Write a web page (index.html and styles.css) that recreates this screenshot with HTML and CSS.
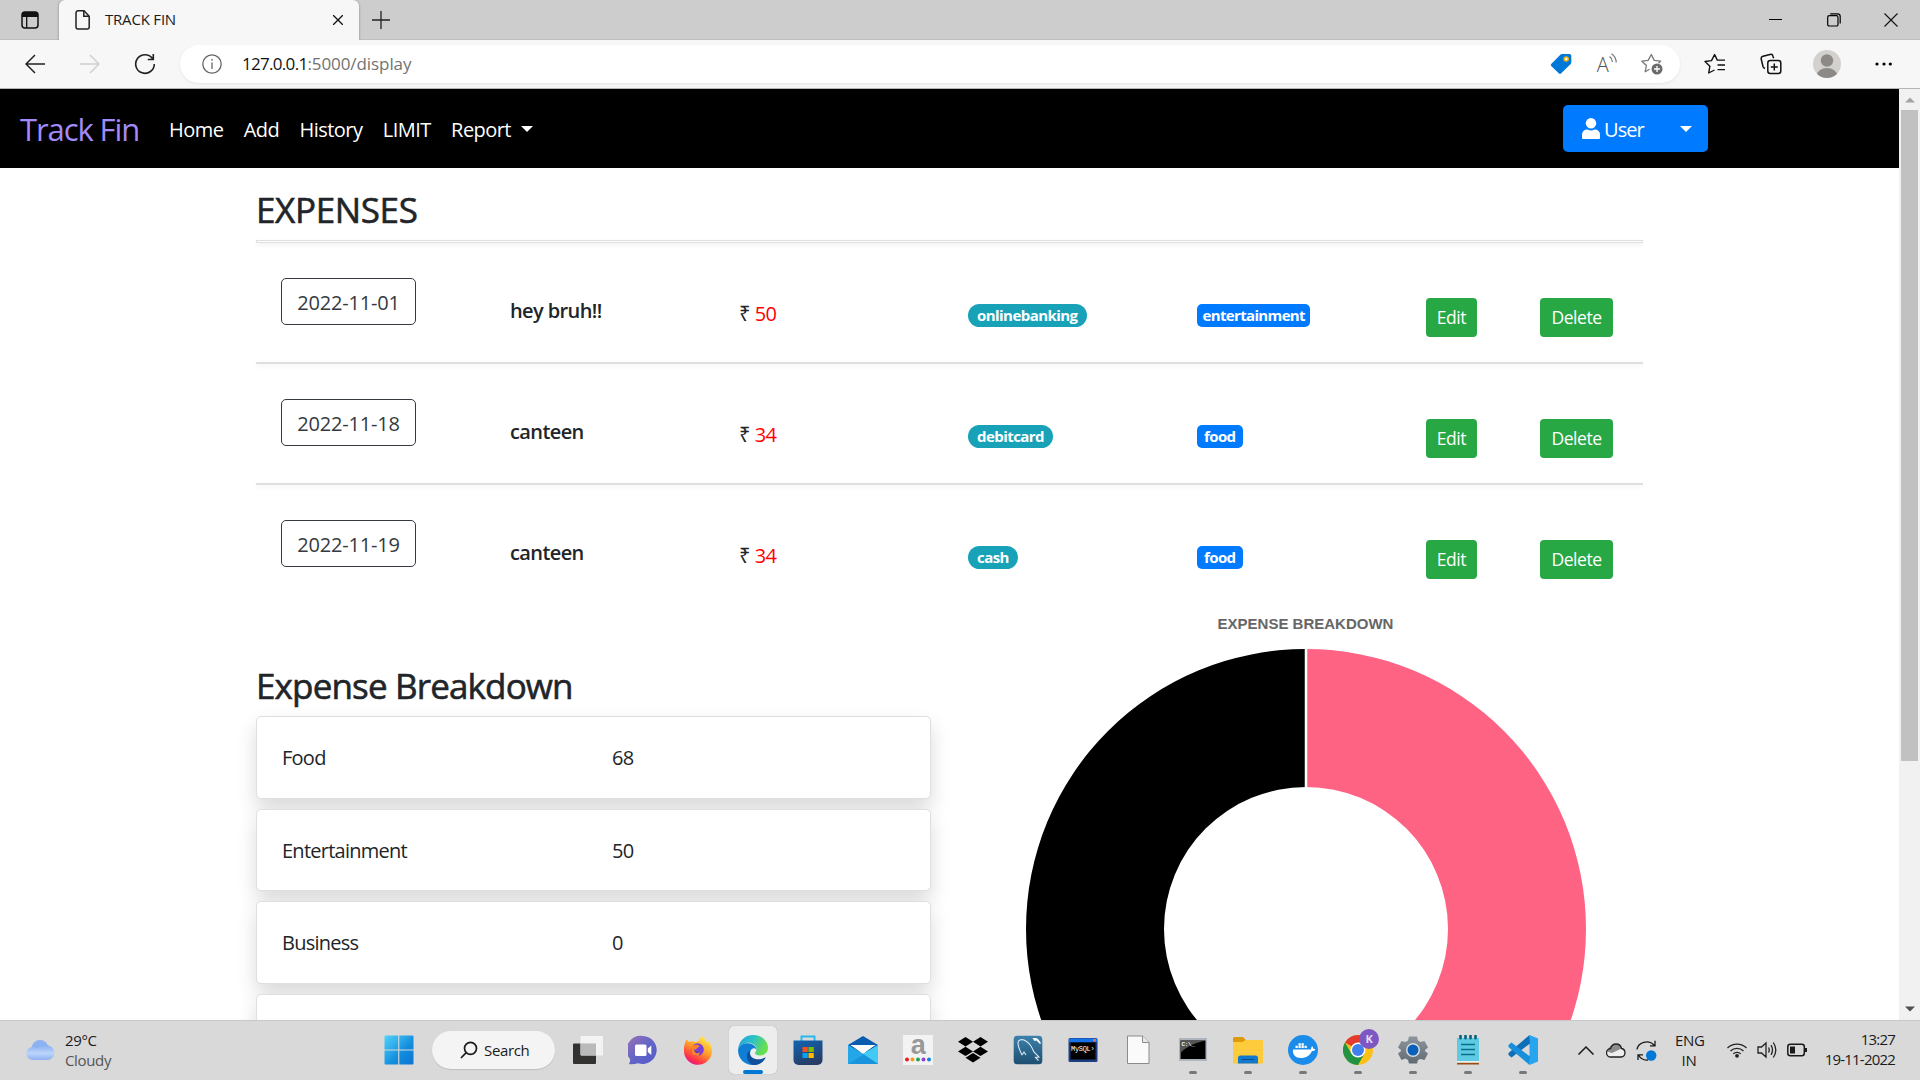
FILE: index.html
```
<!DOCTYPE html>
<html lang="en">
<head>
<meta charset="utf-8">
<title>TRACK FIN</title>
<link rel="stylesheet" href="styles.css">
</head>
<body>
<header class="titlebar">
  <div class="workspace"><svg width="18" height="18" viewBox="0 0 18 18"><rect x="1" y="1" width="16" height="16" rx="3" fill="none" stroke="#111" stroke-width="1.5"/><path d="M1 6V4a3 3 0 0 1 3-3h10a3 3 0 0 1 3 3v2z" fill="#111"/><path d="M5.7 5v12" stroke="#111" stroke-width="1.3"/></svg></div>
  <div class="tab">
    <svg width="15" height="20" viewBox="0 0 15 20" fill="none" stroke="#222" stroke-width="1.5"><path d="M3 .8h6l5.2 5.4V17a2 2 0 0 1-2 2H3a2 2 0 0 1-2-2V3A2 2 0 0 1 3 .8z"/><path d="M8.8 1v5.3h5.2"/></svg>
    <span class="tab-title">TRACK FIN</span>
    <svg width="10" height="10" viewBox="0 0 10 10" stroke="#111" stroke-width="1.3"><path d="M0 0l10 10M10 0L0 10"/></svg>
  </div>
  <svg class="new-tab" width="18" height="18" viewBox="0 0 18 18" stroke="#222" stroke-width="1.3"><path d="M9 0v18M0 9h18"/></svg>
  <div class="window-controls">
    <span><svg width="14" height="14" viewBox="0 0 14 14"><path d="M0 6.5h13" stroke="#000"/></svg></span>
    <span><svg width="14" height="14" viewBox="0 0 14 14" fill="none" stroke="#000" stroke-width="1.2"><rect x=".7" y="2.7" width="10.3" height="10.3" rx="1.6"/><path d="M3.2.8h7.3A2.7 2.7 0 0 1 13.2 3.500v7"/></svg></span>
    <span><svg width="14" height="14" viewBox="0 0 14 14" stroke="#111" stroke-width="1.1"><path d="M.5.5l13 13M13.500.5l-13 13"/></svg></span>
  </div>
</header>

<div class="toolbar">
  <span class="tool"><svg width="20" height="20" viewBox="0 0 20 20" fill="none" stroke="#222" stroke-width="1.5"><path d="M20 10H1M10 1L1 10l9 9"/></svg></span>
  <span class="tool"><svg width="20" height="20" viewBox="0 0 20 20" fill="none" stroke="#cfcfcf" stroke-width="1.5"><path d="M0 10h19M10 1l9 9-9 9"/></svg></span>
  <span class="tool"><svg width="22" height="22" viewBox="0 0 22 22" fill="none" stroke="#222" stroke-width="1.6"><path d="M18.500 5.500A9.300 9.300 0 1 0 20.300 11M19.300 1v5.500h-5.500"/></svg></span>
  <div class="address">
    <svg width="20" height="20" viewBox="0 0 20 20" fill="none" stroke="#666" stroke-width="1.3"><circle cx="10" cy="10" r="9.200"/><path d="M10 8.500V15M10 5v1.800"/></svg>
    <span class="url"><span class="host">127.0.0.1</span>:5000/display</span>
    <div class="address-tools">
      <span><svg width="22" height="22" viewBox="0 0 22 22"><path d="M12 1h7.500A1.800 1.800 0 0 1 21.300 2.800V9.500a2 2 0 0 1-.6 1.400L11 20.500a1.500 1.500 0 0 1-2 0L1.200 13a1.300 1.300 0 0 1 0-1.900L10.600 1.600A2 2 0 0 1 12 1z" fill="#0078d7"/><circle cx="16.200" cy="6" r="2" fill="#fff" stroke="#eeb50c" stroke-width="1.600"/></svg></span>
      <span class="read-aloud">A<svg width="8" height="12" viewBox="0 0 8 12" fill="none" stroke="#767676" stroke-width="1.200"><path d="M.5 3.500Q3 5 3.500 9M2.500.7Q7 3.500 7.200 9.500"/></svg></span>
      <span><svg width="22" height="22" viewBox="0 0 22 22"><path d="M8.500 16.300L4.200 18.700l1.200-6.200L.9 8.200l6.200-.8L10.300 1.500l2.900 5.900 6.300.8-2 2" fill="none" stroke="#777" stroke-width="1.300" stroke-linejoin="round"/><circle cx="16" cy="16" r="5.500" fill="#6b6b6b"/><path d="M16 13v6M13 16h6" stroke="#fff" stroke-width="1.300"/></svg></span>
    </div>
  </div>
  <div class="toolbar-end">
    <span><svg width="22" height="22" viewBox="0 0 22 22" fill="none" stroke="#111" stroke-width="1.400" stroke-linejoin="round"><path d="M10.500 17l-5.800 3 1.200-6.800L1 8.500l6.500-.9L10.600 1.500l2.700 5.600H21M13.500 12H21M13.500 16.600H21"/></svg></span>
    <span><svg width="22" height="22" viewBox="0 0 22 22" fill="none" stroke="#111" stroke-width="1.500"><rect x="7.800" y="7.500" width="13" height="13" rx="2.500"/><path d="M14.300 10.500v7M10.800 14h7M5 15.500A3 3 0 0 1 3 13.500L1.200 6A2.500 2.500 0 0 1 3 3.200l7-1.800A2.500 2.500 0 0 1 13 3.200l.6 2"/></svg></span>
    <span><svg width="28" height="28" viewBox="0 0 28 28"><defs><clipPath id="av"><circle cx="14" cy="14" r="14"/></clipPath></defs><g clip-path="url(#av)"><path d="M0 0h28v28H0z" fill="#d3d1ce"/><circle cx="14" cy="10.500" r="6.200" fill="#8d8986"/><ellipse cx="14" cy="26" rx="10.300" ry="8" fill="#8d8986"/></g></svg></span>
    <span><svg width="18" height="6" viewBox="0 0 18 6"><circle cx="3" cy="3" r="1.600"/><circle cx="10" cy="3" r="1.600"/><circle cx="16.300" cy="3" r="1.600"/></svg></span>
  </div>
</div>

<div class="viewport">
  <div class="page">
    <nav class="navbar">
      <a class="brand">Track Fin</a>
      <a class="nav-link">Home</a>
      <a class="nav-link">Add</a>
      <a class="nav-link">History</a>
      <a class="nav-link">LIMIT</a>
      <a class="nav-link">Report<i class="caret"></i></a>
      <div class="user-group">
        <svg width="18" height="21" viewBox="0 0 18 21" fill="#fff"><circle cx="9" cy="5.300" r="5.200"/><path d="M0 20V16.500a5 5 0 0 1 5-5h.5a7.500 7.500 0 0 0 7 0h.5a5 5 0 0 1 5 5V20a1 1 0 0 1-1 1H1a1 1 0 0 1-1-1z"/></svg>
        <span>User</span>
        <i class="caret"></i>
      </div>
    </nav>
    <main class="container">
      <h3 class="heading">EXPENSES</h3>
      <div class="rule rule-open"></div>
      <div class="expense">
        <div><span class="date">2022-11-01</span></div><div class="name">hey bruh!!</div><div class="amount">₹ <b>50</b></div>
        <div><span class="badge pill">onlinebanking</span></div><div><span class="badge">entertainment</span></div>
        <div><a class="btn btn-edit">Edit</a></div><div><a class="btn btn-delete">Delete</a></div>
      </div>
      <div class="rule"></div>
      <div class="expense">
        <div><span class="date">2022-11-18</span></div><div class="name">canteen</div><div class="amount">₹ <b>34</b></div>
        <div><span class="badge pill">debitcard</span></div><div><span class="badge">food</span></div>
        <div><a class="btn btn-edit">Edit</a></div><div><a class="btn btn-delete">Delete</a></div>
      </div>
      <div class="rule"></div>
      <div class="expense">
        <div><span class="date">2022-11-19</span></div><div class="name">canteen</div><div class="amount">₹ <b>34</b></div>
        <div><span class="badge pill">cash</span></div><div><span class="badge">food</span></div>
        <div><a class="btn btn-edit">Edit</a></div><div><a class="btn btn-delete">Delete</a></div>
      </div>
      <div class="lower">
        <section class="breakdown">
          <h3 class="heading heading-breakdown">Expense Breakdown</h3>
          <div class="card"><span>Food</span><span>68</span></div>
          <div class="card"><span>Entertainment</span><span>50</span></div>
          <div class="card"><span>Business</span><span>0</span></div>
          <div class="card"></div>
        </section>
        <section class="chart">
          <div class="chart-title">EXPENSE BREAKDOWN</div>
          <svg width="562" height="562" viewBox="-281 -281 562 562"><path d="M0-280A280 280 0 0 1 0 280V142A142 142 0 0 0 0-142z" fill="#ff6384"/><path d="M0-280A280 280 0 0 0 0 280V142A142 142 0 0 1 0-142z" fill="#000"/><path d="M0-281V281" stroke="#fff" stroke-width="2.500"/></svg>
        </section>
      </div>
    </main>
  </div>
  <div class="scrollbar">
    <svg width="10" height="6" viewBox="0 0 10 6"><path d="M0 5.500L5 .5l5 5z" fill="#a3a3a3"/></svg>
    <div class="thumb"></div>
    <svg class="down" width="10" height="6" viewBox="0 0 10 6"><path d="M0 .5l5 5 5-5z" fill="#505050"/></svg>
  </div>
</div>

<footer class="taskbar">
  <div class="weather">
    <svg width="30" height="22" viewBox="0 0 30 22"><defs><linearGradient id="cl" x2="0" y2="1"><stop stop-color="#86aef2"/><stop offset=".55" stop-color="#bcd5fa"/><stop offset="1" stop-color="#8fb0f0"/></linearGradient></defs><circle cx="14" cy="9.500" r="8.500" fill="#8cb2f2"/><path d="M7 21a6.500 6.500 0 0 1-.5-13c2-.2 4 .5 5 2 1.500-3 5-4.500 9-3.800a7.500 7.500 0 0 1 2 14.800z" fill="url(#cl)"/></svg>
    <div><div>29°C</div><div class="muted">Cloudy</div></div>
  </div>
  <div class="apps">
    <span class="app"><svg width="30" height="30" viewBox="0 0 30 30"><defs><linearGradient id="wn" x2="1" y2="1"><stop stop-color="#52d3fb"/><stop offset=".6" stop-color="#128ddd"/><stop offset="1" stop-color="#0a75d2"/></linearGradient></defs><path d="M.5 1.500a1 1 0 0 1 1-1h12.700v13.900H.5zM15.300.5H28.500a1 1 0 0 1 1 1v12.900H15.300zM.5 15.500h13.700v14H1.500a1 1 0 0 1-1-1zM15.300 15.500h14.200v13a1 1 0 0 1-1 1H15.300z" fill="url(#wn)"/></svg></span>
    <span class="search"><svg width="18" height="18" viewBox="0 0 18 18" fill="none" stroke="#1a1a1a" stroke-width="1.700"><circle cx="10.500" cy="7.300" r="6"/><path d="M6.200 11.700L1 17"/></svg>Search</span>
    <span class="app"><svg width="30" height="30" viewBox="0 0 30 30"><path d="M0 9.500a1 1 0 0 1 1-1h22v19.500a1 1 0 0 1-1 1H1a1 1 0 0 1-1-1z" fill="#333230"/><rect x="7.500" y="1" width="22.500" height="19.500" rx="1.200" fill="#f5f5f5" opacity=".92"/><path d="M7.500 8.500H23v12H8.700a1.200 1.200 0 0 1-1.200-1.200z" fill="#bababa"/></svg></span>
    <span class="app"><svg width="30" height="30" viewBox="0 0 30 30"><defs><linearGradient id="ch" x2="1" y2="1"><stop stop-color="#9a72b4"/><stop offset=".5" stop-color="#6565c6"/><stop offset="1" stop-color="#5059c9"/></linearGradient></defs><path d="M15 1a14 14 0 1 1-5 27.200C7 29 3.500 29.500.8 29c1.200-1.500 1.500-3.500 1.200-5A14 14 0 0 1 15 1z" fill="url(#ch)"/><rect x="7" y="9.500" width="11.500" height="11.500" rx="1.500" fill="#fff"/><path d="M19.800 13.500l3.500-3v9.500l-3.500-3z" fill="#fff"/></svg></span>
    <span class="app"><svg width="30" height="30" viewBox="0 0 30 30"><defs><linearGradient id="ff" x1=".8" y1=".1" x2=".3" y2="1"><stop stop-color="#ffe648"/><stop offset=".45" stop-color="#ff9a2a"/><stop offset=".8" stop-color="#ff3647"/><stop offset="1" stop-color="#e31587"/></linearGradient></defs><path d="M18.500 1c3 1.500 4 4 5.500 6.500l1-1.500c3.500 4 4.800 9 3.500 13.500A14 14 0 0 1 1 16C.8 11.500 1.500 8.500 3.500 4.500c.8 1 1.500 1.500 2.500 2.500 2-1 4.500-1 7 .2L15 6c1-.5 2-3 3.500-5z" fill="url(#ff)"/><circle cx="14.500" cy="14.500" r="6.300" fill="#7540df"/><path d="M8 12c1.500-2 3.500-2.500 6-2.200l3 1.200-4.500 3.500c1 2 3.500 2.500 5 1l-2 5.500-6-1.500z" fill="#ff8428"/><path d="M11.500 13.500c1.500 3 4 3.500 6 2-1 3-5.500 4-6 0z" fill="#5437c5"/></svg></span>
    <span class="app active"><svg width="30" height="30" viewBox="0 0 30 30"><defs><linearGradient id="eg" x2="1" y2=".35"><stop stop-color="#229edb"/><stop offset=".5" stop-color="#2dc1c8"/><stop offset="1" stop-color="#68e04d"/></linearGradient></defs><path d="M0 14.500C1 5.500 7 0 15 0c9 0 15 6 15 12.500 0 5-3.500 8-8 8-3 0-5-1-5-2.200 0-1 1.500-1.500 1.500-4 0-3-2.500-5.500-6.500-6.300C7.500 7.300 2.500 9.500 0 14.500z" fill="url(#eg)"/><path d="M0 15C2 8.500 8 7.500 12 8.500c4 .8 6.500 3.800 6.500 6.500-1-2.500-5-2.500-6.200 1.500-1.300 5 3 11.500 8.200 12.300C10 33 0 25.500 0 15z" fill="#0f7fd5"/><path d="M12 15.500c-1.500 5 3 8.800 8 8.800 4 0 6-1.800 7.700-1.800-1.700 4.500-7 7.700-12 7.500C9.500 29.500 6 18.500 12 15.500z" fill="#114f9b"/></svg><i></i></span>
    <span class="app"><svg width="30" height="30" viewBox="0 0 30 30"><defs><linearGradient id="st" x2=".4" y2="1"><stop stop-color="#1064b5"/><stop offset="1" stop-color="#273d67"/></linearGradient></defs><path d="M8.500 6V1.500h13V6" fill="none" stroke="#28b9f2" stroke-width="2"/><path d="M.5 5.500h29V25a5 5 0 0 1-5 5h-19a5 5 0 0 1-5-5z" fill="url(#st)"/><path d="M9.500 12h5.300v5H9.500z" fill="#f25022"/><path d="M15.500 12h5.300v5h-5.300z" fill="#7fba00"/><path d="M9.500 18h5.300v5H9.500z" fill="#00a4ef"/><path d="M15.500 18h5.300v5h-5.300z" fill="#ffb900"/></svg></span>
    <span class="app"><svg width="30" height="30" viewBox="0 0 30 30"><path d="M0 10L15 1l15 9v7H0z" fill="#0a5cae"/><path d="M3 10h24L15 19z" fill="#fafafa"/><path d="M0 10l15 9L30 10v19H0z" fill="#28a8ea"/><path d="M30 10v19L15 19z" fill="#42c9f4"/><path d="M0 29l15-10 15 10z" fill="#1893dc"/><path d="M0 10v19l16-9.500z" fill="#23a7e8"/><path d="M2.500 10h25L15 18z" fill="#fafafa"/></svg></span>
    <span class="app"><svg class="overflowing" width="30" height="30" viewBox="0 0 30 30"><path d="M0 0h30v30H0z" fill="#f3f3f3"/><text x="15" y="19" text-anchor="middle" class="glyph-a">a</text><circle cx="4" cy="24.500" r="2" fill="#f01818"/><circle cx="9.500" cy="24.500" r="2" fill="#f09b1e"/><circle cx="15" cy="24.500" r="2" fill="#20a65a"/><circle cx="20.500" cy="24.500" r="2" fill="#9140d4"/><circle cx="26" cy="24.500" r="2" fill="#1382df"/></svg></span>
    <span class="app"><svg width="30" height="30" viewBox="0 0 30 30"><path d="M7.500 2L15 6.700 7.500 11.400 0 6.700zM22.500 2L30 6.700l-7.500 4.700L15 6.700zM7.500 11.700L15 16.400l-7.500 4.700L0 16.400zM22.500 11.700L30 16.400l-7.500 4.700-7.500-4.700zM15 18l7.500 4.700L15 27.500 7.500 22.700z"/></svg></span>
    <span class="app"><svg width="30" height="30" viewBox="0 0 30 30"><defs><linearGradient id="wb" x2="0" y2="1"><stop stop-color="#3d82ad"/><stop offset="1" stop-color="#1d4f70"/></linearGradient></defs><rect x=".7" y=".7" width="28.600" height="28.600" rx="3.500" fill="url(#wb)"/><path d="M9 20c-2-4-4-8-4-12 0-3 3-4 6-3 5 2 8 7 10 12l5 5-3.500.5 3 3M9 20l2-3 2 3" fill="none" stroke="#dce9f1" stroke-width="1.100"/><path d="M19.500 3l2 3 2-.5L27 9l1-1-3-4-2-1z" fill="#fff"/></svg></span>
    <span class="app"><svg width="30" height="30" viewBox="0 0 30 30"><rect x=".5" y="3" width="29" height="24" rx="1.500" fill="#1d3f82"/><path d="M1 3.500h28V7H1z" fill="#1672e8"/><path d="M25 4h3v2.500h-3z" fill="#ea6b45"/><path d="M2.500 7.500h25v17h-25z"/><text x="3" y="15.500" class="glyph-mysql">MySQL›</text></svg></span>
    <span class="app"><svg width="30" height="30" viewBox="0 0 30 30"><path d="M4.500 1h15l6.500 6.500V28.500H4.500z" fill="#fafafa" stroke="#8b8b8b"/><path d="M19.500 1v6.500H26" fill="#e9e9e9" stroke="#8b8b8b"/></svg></span>
    <span class="app open"><svg width="30" height="30" viewBox="0 0 30 30"><path d="M1 3h28v23H1z" fill="#aeb4bb"/><path d="M2.500 5.500h25V24h-25z"/><path d="M2.500 5.500h25C17 8 9 11 2.500 18z" fill="#555"/><text x="3.500" y="10.500" class="glyph-cmd">C:\_</text></svg><i></i></span>
    <span class="app open"><svg width="30" height="30" viewBox="0 0 30 30"><path d="M0 3.500A1.500 1.500 0 0 1 1.500 2H10l3 3v4H0z" fill="#dd9a0a"/><path d="M0 7h9.500l3-2H30v23.500H0z" fill="#fecb3c"/><path d="M5 28.500V23a2.500 2.500 0 0 1 2.500-2.500h15A2.500 2.500 0 0 1 25 23v5.500z" fill="#1177cf"/><path d="M9 24.500h12" stroke="#064f8f"/></svg><i></i></span>
    <span class="app open"><svg width="30" height="30" viewBox="0 0 30 30"><circle cx="15" cy="15" r="15" fill="#1c8ceb"/><path d="M5 14.500h18c0-1.500.3-2.500 1-3.300 1 .7 1.300 1.600 1.300 2.500.9-.1 1.700.1 2.200.5-.7 1.500-2 1.900-3.500 1.800C22 20.500 18 23 13 23c-5.500 0-8.500-3-8-8.500z" fill="#fff"/><path d="M7.500 10.800h2.300V13H7.500zM10.500 10.800h2.300V13h-2.300zM13.500 10.800h2.300V13h-2.300zM16.500 10.800h2.300V13h-2.300zM10.500 8.300h2.300v2.200h-2.300zM13.500 8.300h2.300v2.200h-2.300z" fill="#fff"/></svg><i></i></span>
    <span class="app open"><svg class="wide" width="37" height="36" viewBox="0 -6 37 36"><circle cx="15" cy="15" r="15" fill="#fbc116"/><path d="M15 15L2 7.500A15 15 0 0 1 28 7.500H15z" fill="#e33b2e"/><path d="M2 7.500A15 15 0 0 0 15 30l6.500-11.200L8.500 18.700z" fill="#229342"/><circle cx="15" cy="15" r="7.500" fill="#fff"/><circle cx="15" cy="15" r="6" fill="#4080ee"/><circle cx="26" cy="4" r="10" fill="#7e57c2"/><text x="26" y="8" text-anchor="middle" class="glyph-k">K</text></svg><i></i></span>
    <span class="app open"><svg width="30" height="30" viewBox="0 0 30 30"><defs><linearGradient id="se" x2="0" y2="1"><stop stop-color="#8d969e"/><stop offset="1" stop-color="#626b73"/></linearGradient></defs><path d="M11 1.500h8l1 4 2.500 1.500 4-1 3.500 6.500-3 2.500v1l3 2.500-3.500 6.500-4-1L20 25l-1 3.500h-8L10 25l-2.500-1.500-4 1.500L0 18.500 3 16v-1L0 12.500 3.500 6l4 1L10 5.500z" fill="url(#se)"/><circle cx="15" cy="15" r="7" fill="#d8dce0"/><circle cx="15" cy="15" r="5.500" fill="#0a5fb8"/></svg><i></i></span>
    <span class="app open"><svg width="30" height="30" viewBox="0 0 30 30"><path d="M4 26h22v3.500H4z" fill="#9b4c12"/><path d="M4 26h22v1.800H4z" fill="#eee"/><path d="M4 3h22v23H4z" fill="#5ecbe2"/><path d="M8 9.500h14M8 14.500h14M8 19.500h14" stroke="#0b6d8c" stroke-width="1.500"/><path d="M7.500.8v2.400M12.500.8v2.400M17.500.8v2.400M22.500.8v2.400" stroke="#0b5f7c" stroke-width="2.600" stroke-linecap="round"/></svg><i></i></span>
    <span class="app open"><svg width="30" height="30" viewBox="0 0 30 30"><path d="M21.500 0L30 3.500v23L21.500 30z" fill="#27a5ee"/><path d="M21.500 0L22 8.500 3.500 22.500.5 20v-2z" fill="#0e6fb8"/><path d="M21.500 30l.5-8.500L3.500 7.500.5 10v2z" fill="#178fdc"/></svg><i></i></span>
  </div>
  <div class="tray">
    <svg width="16" height="9" viewBox="0 0 16 9" fill="none" stroke="#1a1a1a" stroke-width="1.500"><path d="M.5 8.500L8 1l7.500 7.500"/></svg>
    <svg class="tray-cloud" width="20" height="15" viewBox="0 0 20 15"><path d="M5 14a4.200 4.200 0 0 1-.4-8.500C5.500 2.500 7.500 1 10 1c3 0 5 2 5.500 4.500A4.300 4.300 0 0 1 15 14z" fill="#eee"/><path d="M1 8.500C3 4.500 5 1 10 1c3 0 5 2 5.500 4.500L6 10z" fill="#8d8d8d"/><path d="M5 14a4.200 4.200 0 0 1-.4-8.500C5.500 2.500 7.500 1 10 1c3 0 5 2 5.500 4.500A4.300 4.300 0 0 1 15 14z" fill="none" stroke="#222" stroke-width="1.300"/></svg>
    <svg class="tray-sync" width="21" height="21" viewBox="0 0 21 21" fill="none" stroke="#1a1a1a" stroke-width="1.300"><path d="M1 9.500C2 3 12-1.500 18.500 5.500M19 .8v5h-5M12 20C8 20.500 4.500 18.500 2.500 15M2 20v-5.200h5"/><circle cx="15.200" cy="15.500" r="5.200" fill="#0078d7" stroke="none"/></svg>
    <div class="lang"><div>ENG</div><div>IN</div></div>
    <svg class="tray-wifi" width="20" height="16" viewBox="0 0 20 16" fill="none" stroke="#222" stroke-width="1.300"><path d="M.5 6a13.500 13.500 0 0 1 19 0M3.500 9a9.300 9.300 0 0 1 13 0M6.300 11.800a5.300 5.300 0 0 1 7.400 0"/><circle cx="10" cy="13.800" r="1.900" fill="#222" stroke="none"/></svg>
    <svg class="tray-sound" width="20" height="18" viewBox="0 0 20 18" fill="none" stroke="#222" stroke-width="1.300"><path d="M1 6h3.500L9 2v14L4.500 12H1zM11.500 6.500q1.500 2.500 0 5M14 4.200q3 4.800 0 9.600M16.300 1.500q5 7.500 0 15"/></svg>
    <svg class="tray-battery" width="20" height="14" viewBox="0 0 20 14" fill="none" stroke="#1a1a1a" stroke-width="1.500"><rect x=".8" y="1.200" width="16.500" height="11.600" rx="2.500"/><path d="M3 3.500h5v7H3z" fill="#1a1a1a" stroke="none"/><path d="M19 5v4" stroke-width="2"/></svg>
    <div class="clock"><div>13:27</div><div>19-11-2022</div></div>
  </div>
</footer>
</body>
</html>
```
FILE: styles.css
```
* { box-sizing: border-box; }
body { margin: 0; width: 1920px; height: 1080px; overflow: hidden; display: flex; flex-direction: column; background: #fff; color: #212529; font: 20px/30px "Open Sans", "Noto Sans", sans-serif; }
svg { display: block; flex: none; }
.overflowing { overflow: visible; }

/* Browser chrome */
.titlebar { height: 40px; flex: none; display: flex; align-items: center; background: #cdcdcd; box-shadow: inset 0 -1px #bfbfbf; }
.workspace { width: 59px; padding-left: 21px; }
.tab { width: 300px; height: 40px; padding: 0 16px; display: flex; align-items: center; background: #f7f7f7; border-radius: 6px 6px 0 0; box-shadow: -1px 0 2px rgba(0,0,0,.15), 1px 0 2px rgba(0,0,0,.15); clip-path: inset(0 -4px 0 -4px); }
.tab-title { flex: 1; padding: 0 0 2px 15px; font-size: 15px; letter-spacing: -.2px; color: #1b1b1b; }
.new-tab { margin: 0 0 1px 13px; }
.window-controls { margin-left: auto; display: flex; padding-bottom: 1px; }
.window-controls span { width: 57.5px; display: flex; justify-content: center; }
.toolbar { height: 49px; flex: none; display: flex; align-items: center; padding: 0 5px 1px 7px; background: #f7f7f7; border-bottom: 1px solid #b5b5b5; }
.tool { width: 55px; display: flex; justify-content: center; }
.address { width: 1500px; height: 38px; margin-left: 8px; padding: 0 5px 0 22px; display: flex; align-items: center; border-radius: 19px; background: #fff; box-shadow: 0 1px 3px rgba(0,0,0,.08); }
.url { padding-left: 20px; font-size: 17px; letter-spacing: -.08px; color: #727272; }
.host { color: #111; letter-spacing: -.7px; }
.address-tools { margin-left: auto; display: flex; align-items: center; }
.address-tools span { width: 45.5px; display: flex; justify-content: center; }
.address-tools .read-aloud { height: 24px; padding-top: 1px; font-size: 20px; font-weight: 300; line-height: 24px; color: #555; }
.toolbar-end { margin-left: 7px; display: flex; align-items: center; }
.toolbar-end span { width: 56px; display: flex; justify-content: center; }

/* Page */
.viewport { height: 931px; flex: none; display: flex; overflow: hidden; }
.page { width: 1899px; height: 931px; overflow: hidden; }
.navbar { height: 79px; padding-left: 20px; display: flex; align-items: center; background: #000; color: #fff; }
.brand { width: 149px; font-size: 31px; letter-spacing: -1.1px; color: #a28bf8; }
.nav-link { margin-right: 20.400px; padding-top: 2px; display: flex; align-items: center; letter-spacing: -.55px; }
.caret { width: 0; height: 0; border: 6px solid transparent; border-top-color: #fff; border-bottom: 0; }
.nav-link .caret { margin: -2px 0 0 10px; }
.user-group { width: 145px; height: 47px; margin-left: auto; margin-right: 191px; padding: 0 16px 0 19px; display: flex; align-items: center; border-radius: 5px; background: #007bff; letter-spacing: -.95px; }
.user-group span { flex: 1; padding: 2px 0 0 4px; }
.container { width: 1387px; margin-left: 256px; padding-top: 21px; }
.heading { margin: 0; font-size: 35px; line-height: 42px; font-weight: 500; letter-spacing: -.35px; -webkit-text-stroke: .6px #212529; }
.rule { height: 2px; background: #dfdfdf; box-shadow: 0 2px 5px rgba(0,0,0,.075); }
.rule-open { height: 3px; margin-top: 9px; border: 1px solid #dfdfdf; background: #fff; }
.expense { height: 119px; padding-left: 25px; display: grid; grid-template-columns: repeat(2, 229px) 228.500px 229px 229.500px 114px 73px; align-items: start; }
.date { width: 135px; height: 47px; margin-top: 35px; display: flex; align-items: center; justify-content: center; padding-top: 3px; border: 1px solid #343a40; border-radius: 5px; letter-spacing: -.2px; color: #343a40; }
.name { margin-top: 53px; font-weight: 600; letter-spacing: -.6px; }
.amount { margin-top: 56px; letter-spacing: -.5px; }
.amount b { color: #f00; font-weight: 400; }
.badge { width: fit-content; min-width: 46px; height: 23px; margin-top: 61px; padding: 0 5.500px 2px 6px; display: flex; align-items: center; justify-content: center; border-radius: 5px; background: #007bff; color: #fff; font-size: 15px; font-weight: 700; letter-spacing: -.65px; }
.pill { padding: 0 9px 2px 9.500px; border-radius: 12px; background: #17a2b8; letter-spacing: -.55px; }
.btn { height: 39px; margin-top: 55px; padding-bottom: 1px; display: flex; align-items: center; justify-content: center; border-radius: 4px; background: #28a745; color: #fff; font-size: 17.500px; letter-spacing: -.45px; }
.btn-edit { width: 51px; }
.btn-delete { width: 73px; }
.lower { display: flex; height: 440px; }
.breakdown { width: 675px; padding-top: 61px; }
.heading-breakdown { margin-bottom: 9px; letter-spacing: -.85px; }
.card { height: 82.500px; margin-bottom: 10px; padding: 2px 0 0 25px; display: grid; grid-template-columns: 330px 1fr; align-items: center; border: 1px solid #dfdfdf; border-radius: 5px; background: #fff; box-shadow: 0 10px 20px rgba(0,0,0,.15); letter-spacing: -.75px; }
.card span + span { letter-spacing: -.6px; }
.chart { width: 712px; padding-left: 93.500px; }
.chart-title { width: 562px; height: 43.500px; padding-top: 5px; text-align: center; font: 700 15px/30px "Liberation Sans", Arial, sans-serif; color: #666; }
.scrollbar { width: 21px; display: flex; flex-direction: column; align-items: center; padding: 8px 0; background: #f1f1f1; }
.thumb { width: 17px; height: 651px; margin-top: 7px; background: #c1c1c1; }
.down { margin-top: auto; }

/* Taskbar */
.taskbar { height: 60px; flex: none; display: flex; background: #d9d9d9; border-top: 1px solid #c8c8c8; color: #1b1b1b; font-size: 15px; line-height: 20px; letter-spacing: -.35px; }
.weather { width: 371px; padding: 0 0 2px 26px; display: flex; align-items: center; gap: 9px; }
.muted { color: #555; }
.apps { display: flex; align-items: center; height: 58px; }
.app { width: 55px; height: 48px; display: flex; flex-direction: column; align-items: center; padding-top: 9px; }
.search { width: 123px; height: 38px; margin: 0 5px 0 6px; padding-left: 28px; display: flex; align-items: center; gap: 6px; border-radius: 19px; background: #f4f4f4; box-shadow: 0 1px 1px rgba(0,0,0,.12); }
.app i { width: 8px; height: 4px; margin-top: 6px; border-radius: 2px; background: #787878; }
.active { width: 48px; margin: 0 3.500px; border-radius: 5px; background: #ededed; box-shadow: 0 0 1px rgba(0,0,0,.3); }
.active i { width: 20px; margin-top: 5px; background: #0078d4; }
.app .wide { margin: -6px 0 0 7px; }
.glyph-a { font: 700 27px "Liberation Sans", sans-serif; fill: #999; }
.glyph-mysql { font: 7px "Liberation Mono", monospace; fill: #fff; letter-spacing: -.3px; }
.glyph-cmd { font: 700 6px "Liberation Mono", monospace; fill: #eee; }
.glyph-k { font: 700 11px "Open Sans", sans-serif; fill: #e4d9f5; }
.tray { margin-left: auto; padding: 0 25px 1px 0; display: flex; align-items: center; text-align: center; }
.tray-cloud { margin-left: 12px; }
.tray-sync { margin-left: 10px; }
.lang { width: 28px; margin-left: 18px; }
.tray-wifi { margin-left: 24px; }
.tray-sound { margin-left: 10px; }
.tray-battery { margin-left: 10px; }
.clock { width: 88px; padding-bottom: 2px; text-align: right; letter-spacing: -.8px; }
```
